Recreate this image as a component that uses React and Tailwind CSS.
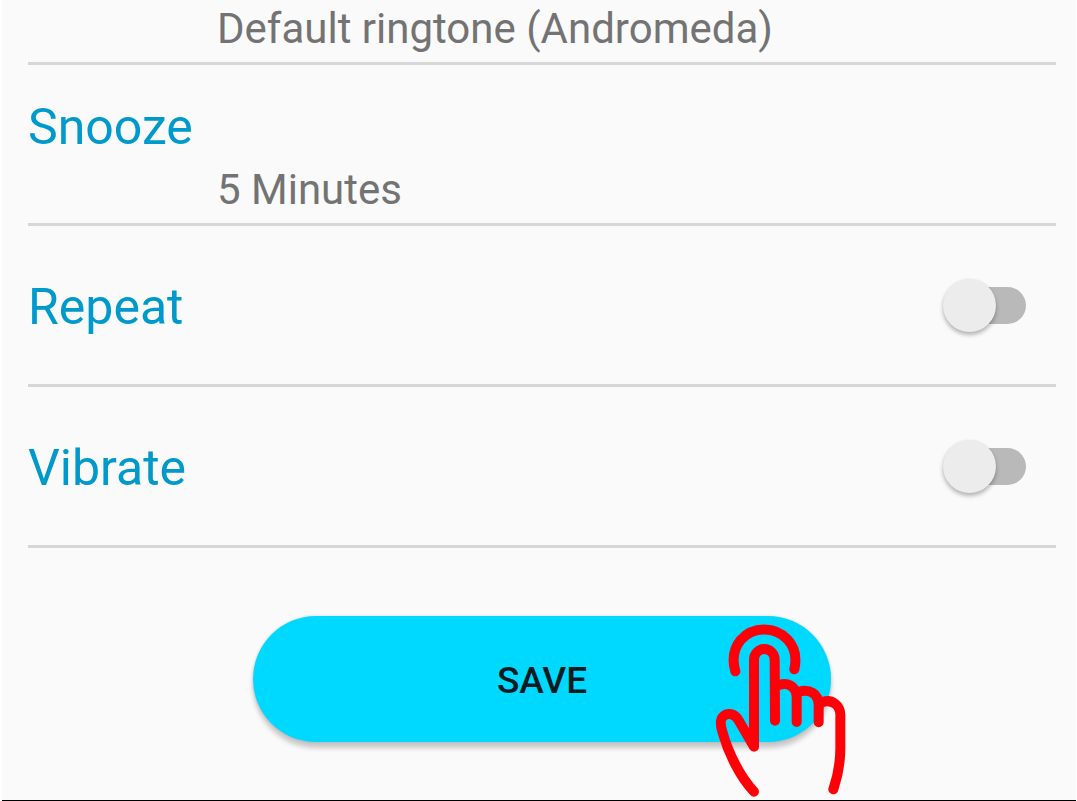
import { useState } from "react";

function ValueText({ children }) {
  return <p className="pl-[189px] text-[42px] leading-[50px] text-[#737373]">{children}</p>;
}

function ToggleRow({ id, label }) {
  const [on, setOn] = useState(false);
  return (
    <div className="flex h-[161px] items-center justify-between border-b-3 border-[#d6d6d6] pr-[30px]">
      <label htmlFor={id} className="pt-1 text-[50px] leading-[60px] text-[#0099cc]">
        {label}
      </label>
      <input
        id={id}
        type="checkbox"
        role="switch"
        checked={on}
        onChange={(e) => setOn(e.target.checked)}
        className="grid h-[53px] w-[83px] shrink-0 cursor-pointer appearance-none items-center before:z-10 before:col-start-1 before:row-start-1 before:size-[53px] before:rounded-full before:bg-[#ececec] before:shadow-[0_3px_4px_rgba(0,0,0,0.28),0_0_2px_rgba(0,0,0,0.06)] before:content-[''] after:col-start-1 after:row-start-1 after:ml-2 after:h-[37px] after:rounded-full after:bg-[#b9b9b9] after:content-[''] checked:before:justify-self-end checked:after:bg-[#80cce6]"
      />
    </div>
  );
}

function TapHand() {
  return (
    <svg
      viewBox="39 39 402 525"
      className="pointer-events-none absolute top-[7px] -right-4 h-[175px] w-[134px]"
      fill="none"
      stroke="#ff0008"
      strokeWidth="30"
      strokeLinecap="round"
      strokeLinejoin="round"
      aria-hidden="true"
    >
      <path d="M106 184C94 142 104 112 122 90C158 48 226 48 263 89C284 112 291 142 283 178" />
      <path d="M225 332L224 149A31 32 0 0 0 162 149V410L117 333C105 310 82 306 69 320C58 330 62 348 67 365C85 430 120 500 162 545" />
      <path d="M240 224C268 216 290 234 290 262V336" />
      <path d="M298 245C326 236 356 250 356 285V337" />
      <path d="M368 276C398 266 421 288 421 314V415C421 460 413 500 400 538" />
    </svg>
  );
}

export default function App() {
  return (
    <div className="bg-white pr-px pl-0.5 font-[Roboto,sans-serif]">
      <main className="flex min-h-screen flex-col border-b border-black bg-[#fafafa] pr-5 pl-[26px]">
        <section className="border-b-3 border-[#d6d6d6] pt-1 pb-2">
          <ValueText>Default ringtone (Andromeda)</ValueText>
        </section>
        <section className="border-b-3 border-[#d6d6d6] pt-8 pb-2">
          <h2 className="mb-2 text-[50px] leading-[60px] text-[#0099cc]">Snooze</h2>
          <ValueText>5 Minutes</ValueText>
        </section>
        <ToggleRow id="repeat" label="Repeat" />
        <ToggleRow id="vibrate" label="Vibrate" />
        <div className="relative mx-auto mt-[68px] w-[578px] max-w-full">
          <button
            type="button"
            className="block h-[126px] w-full rounded-full bg-[#00d9ff] pt-1 text-[37px] font-medium text-[#001c21] shadow-[0_6px_5px_rgba(0,0,0,0.2),0_0_3px_rgba(0,0,0,0.15)]"
          >
            SAVE
          </button>
          <TapHand />
        </div>
      </main>
    </div>
  );
}
